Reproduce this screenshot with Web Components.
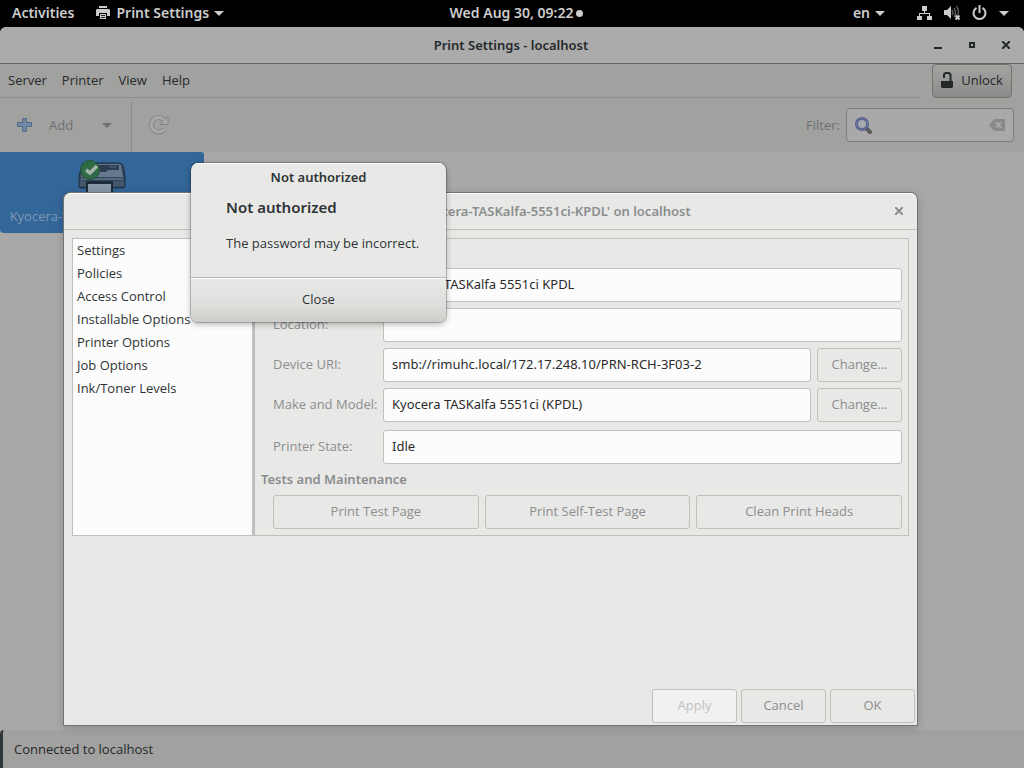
<!DOCTYPE html>
<html lang="en">
<head>
<meta charset="utf-8">
<title>Print Settings - localhost</title>
<style>
html, body { margin: 0; height: 100%; }
body { background: #000; font: 13px/20px "Open Sans", "Noto Sans", sans-serif; color: #2e3436; overflow: hidden; }
</style>
</head>
<body>
<desktop-shell>
  <top-bar slot="bar"></top-bar>
  <settings-window></settings-window>
  <properties-window slot="overlay"></properties-window>
  <message-dialog slot="overlay" heading="Not authorized" action="Close">The password may be incorrect.</message-dialog>
</desktop-shell>
<script>
const define = (name, html, setup) => customElements.define(name, class extends HTMLElement {
  constructor() {
    super();
    const t = document.createElement('template');
    t.innerHTML = html;
    this.attachShadow({ mode: 'open' }).append(t.content.cloneNode(true));
  }
  connectedCallback() { if (setup) setup(this, this.shadowRoot); }
});

define('desktop-shell', `
<style>
:host { display: flex; flex-direction: column; min-height: 100vh; position: relative; }
main { flex: 1; display: flex; }
</style>
<slot name="bar"></slot><main><slot></slot></main><slot name="overlay"></slot>`);

define('drop-arrow', `
<style>:host { display: inline-block; flex: none; line-height: 0; }</style>
<svg width="10" height="5" viewBox="0 0 10 5"><path d="M0 0h10L5 5z" fill="currentColor"/></svg>`);

define('top-bar', `
<style>
:host { display: grid; grid-template-columns: 1fr auto 1fr; align-items: center; height: 27px; padding-bottom: 1px; box-sizing: border-box; background: #000; color: #ccc; font-family: "Noto Sans", sans-serif; font-size: 14px; font-weight: 600; }
div { display: flex; align-items: center; }
button { all: unset; display: flex; align-items: center; gap: 5px; }
.left { gap: 22px; padding-left: 12px; }
.mid { padding-left: 9px; }
.mid button { gap: 3px; }
.right { justify-content: flex-end; padding-right: 15px; gap: 32px; }
.status { gap: 11px; }
i { width: 7px; height: 7px; border-radius: 50%; background: #ccc; }
svg { display: block; }
</style>
<div class="left">
  <button>Activities</button>
  <button>
    <svg width="15" height="14" viewBox="0 0 15 14" fill="#ccc"><path d="M3 0h8v2H3z"/><path d="M1 3h12l1 1v6h-3V7H3v3H0V4z"/><path d="M4 8h6v5H4z"/><path d="M5 9h4v1H5zM5 11h4v1H5z" fill="#222"/></svg>
    <span>Print Settings</span><drop-arrow></drop-arrow>
  </button>
</div>
<div class="mid"><button><span>Wed Aug 30, 09:22</span><i></i></button></div>
<div class="right">
  <button>en<drop-arrow></drop-arrow></button>
  <button class="status" aria-label="System menu">
    <svg width="16" height="16" viewBox="0 0 16 16" fill="#ccc"><path d="M5 1h5v5H5zM0 11h5v4H0zM10 11h5v4h-5z"/><path d="M7 6h1v2h5v3h-1V9H3v2H2V8h5z"/></svg>
    <svg width="17" height="16" viewBox="0 0 17 16"><path d="M0 5h3l4-4v13l-4-4H0z" fill="#ccc"/><path d="M8 5q2 2.500 0 5M10 3q3 4.500 0 9M12.500 1q4 6.500 0 10" fill="none" stroke="#555" stroke-width="1.500"/><path d="M11.500 10.500l4 4m0-4l-4 4" stroke="#ccc" stroke-width="2"/></svg>
    <svg width="16" height="16" viewBox="0 0 16 16" fill="none" stroke="#ccc" stroke-width="2"><path d="M4.500 2.800a6 6 0 1 0 6 0M7.500 0v8"/></svg>
    <drop-arrow></drop-arrow>
  </button>
</div>`);

define('menu-bar', `
<style>
:host { display: flex; align-items: flex-start; }
nav { flex: 1; display: flex; gap: 15px; height: 33px; box-sizing: content-box; align-items: center; padding-left: 8px; border-bottom: 1px solid #8e8e8c; }
button { all: unset; line-height: 18px; padding-bottom: 2px; }
.unlock { display: flex; align-items: center; justify-content: center; gap: 8px; box-sizing: border-box; width: 80px; height: 34px; margin: 0 12px; border: 1px solid #72726f; border-radius: 4px; background: linear-gradient(#a3a3a2, #959594 60%, #8a8a88); }
</style>
<nav><button>Server</button><button>Printer</button><button>View</button><button>Help</button></nav>
<button class="unlock"><svg width="12" height="16" viewBox="0 0 12 16" fill="#232829"><path d="M0 9h12v6l-1 1H1l-1-1z"/><path d="M3 6V2.500L4.500 1H8l1.500 1.500V9" fill="none" stroke="#232829" stroke-width="2"/></svg>Unlock</button>`);

define('tool-bar', `
<style>
:host { display: flex; height: 54px; align-items: center; padding: 0 10px 0 17px; color: #6e7071; }
button { all: unset; display: flex; align-items: center; }
.add { gap: 16px; }
.more { padding: 0 19px 0 29px; }
hr { align-self: stretch; margin: 4px 17px 0 0; border: 0; border-left: 1px solid #8c8c8a; }
form { margin-left: auto; display: flex; align-items: center; gap: 6px; }
.box { display: flex; align-items: center; box-sizing: border-box; width: 168px; height: 34px; padding: 0 8px; border: 1px solid #7c7c79; border-radius: 4px; background: #a9a9a9; }
input { flex: 1; min-width: 0; border: 0; background: none; font: inherit; outline: 0; }
</style>
<button class="add"><svg width="16" height="16" viewBox="0 0 16 16"><path d="M5.500 1.500h4v4h5v4h-5v5h-4v-5h-5v-4h5z" fill="#7187a6" stroke="#566a88" stroke-linejoin="round"/></svg>Add</button>
<button class="more" aria-label="More"><drop-arrow></drop-arrow></button>
<hr>
<button aria-label="Refresh"><svg width="20" height="20" viewBox="0 0 20 20" fill="none"><path d="M15 14.500A7.200 7.200 0 1 1 15 5" stroke="#858583" stroke-width="5"/><path d="M11 9.500h8V1z" fill="#aaaaa8" stroke="#858583"/><path d="M15 14.500A7.200 7.200 0 1 1 15 5" stroke="#aaaaa8" stroke-width="3"/></svg></button>
<form><label for="f">Filter:</label>
<span class="box">
<svg width="17" height="17" viewBox="0 0 17 17"><path d="M11 11l4 4" stroke="#5b5b58" stroke-width="4" stroke-linecap="round"/><circle cx="7" cy="7" r="5.500" fill="#a4a9b0" stroke="#4f5c84" stroke-width="3"/><circle cx="7" cy="7" r="5.500" fill="none" stroke="#7380a8" stroke-width="1"/></svg>
<input id="f" type="text">
<svg width="16" height="12" viewBox="0 0 16 12"><path d="M0 6l5-6h11v12H5z" fill="#8a8a89"/><path d="M7 3.500l5 5m0-5l-5 5" stroke="#a9a9a9" stroke-width="2"/></svg>
</span></form>`);

define('printer-tile', `
<style>
:host { display: flex; flex-direction: column; align-items: center; box-sizing: border-box; width: 204px; padding: 2px 8px 7px; border-radius: 0 3px 4px 4px; background: #336699; color: #7f98b5; }
svg { display: block; }
span { line-height: 19px; white-space: nowrap; }
</style>
<svg width="48" height="53" viewBox="0 0 48 53">
<path d="M4 11q0-2 3-2h34q3 0 4 2l2 11v10q0 2-2 2H3q-2 0-2-2V22z" fill="#33485d" stroke="#1d2f40"/>
<path d="M5 12q0-2 3-2h32q3 0 3 2l2 11H3z" fill="#65788d"/>
<path d="M20 11h21v5H30l-2 2h-6l-2-2z" fill="#2b3c4e"/>
<path d="M31 13h8" stroke="#53667a"/>
<path d="M3 25h42" stroke="#7688a0"/>
<path d="M2 27h44v5H2z" fill="#44586d"/>
<path d="M8 27h27v14H8z" fill="#1d2c3a"/><path d="M10 30h23v12H10z" fill="#8797a8"/>
<circle cx="12" cy="16" r="9.500" fill="#2f6b46" stroke="#25513b"/>
<path d="M8 16l4 3 7-7" fill="none" stroke="#a8b5ac" stroke-width="3.500"/>
</svg>
<span><slot></slot></span>`);

define('settings-window', `
<style>
:host { flex: 1; display: flex; flex-direction: column; overflow: hidden; border-radius: 6px 6px 0 0; background: #a1a1a0; color: #24292a; }
header { display: grid; grid-template-columns: 1fr auto 1fr; align-items: center; height: 36px; border-bottom: 1px solid #64645f; background: #ababab; padding-right: 14px; padding-left: 12px; }
h1 { grid-column: 2; margin: 0; font-family: "Noto Sans", sans-serif; font-size: 13px; font-weight: 600; }
.ctl { display: flex; justify-content: flex-end; gap: 26px; align-items: center; }
.ctl button { all: unset; line-height: 0; }
main { flex: 1; background: #a8a8a8; }
footer { display: flex; align-items: center; height: 38px; padding-left: 11px; border-left: 3px solid #303738; border-top-left-radius: 4px; }
</style>
<header><h1>Print Settings - localhost</h1>
<div class="ctl">
<button aria-label="Minimize"><svg width="8" height="8"><path d="M0 6h8v2H0z" fill="#24292a"/></svg></button>
<button aria-label="Maximize"><svg width="8" height="8"><path d="M2 2h4v4H2z" fill="none" stroke="#24292a" stroke-width="2"/></svg></button>
<button aria-label="Close"><svg width="8" height="8"><path d="M0 0l8 8M8 0L0 8" stroke="#24292a" stroke-width="2"/></svg></button>
</div></header>
<menu-bar></menu-bar>
<tool-bar></tool-bar>
<main><printer-tile>Kyocera-TASKalfa-5551ci-KPDL</printer-tile></main>
<footer>Connected to localhost</footer>`);

define('form-row', `
<style>
:host { display: flex; gap: 6px; }
label { width: 104px; line-height: 32px; color: #8b8e8f; white-space: nowrap; }
input { flex: 1; min-width: 0; box-sizing: border-box; height: 34px; padding: 0 8px 2px; border: 1px solid #bfbfbb; border-radius: 3px; background: #fcfcfc; color: #2b2b2b; font: inherit; font-family: "Noto Sans", sans-serif; outline: 0; }
</style>
<label for="i"></label><input id="i" type="text" readonly><slot></slot>`, (el, root) => {
  root.querySelector('label').textContent = el.getAttribute('label');
  root.querySelector('input').value = el.getAttribute('value') || '';
});

define('flat-button', `
<style>
:host { display: block; }
button { box-sizing: border-box; width: 100%; height: 34px; padding: 0 4px 2px; border: 1px solid #bfbfbb; border-radius: 3px; background: #e8e8e6; color: #8b8e8f; font: inherit; }
:host([off]) button { background: #f1f1f1; color: #c1c3c1; }
</style>
<button><slot></slot></button>`, (el, root) => { root.querySelector('button').disabled = el.hasAttribute('off'); });

define('properties-window', `
<style>
:host { position: absolute; left: 64px; right: 107px; top: 193px; bottom: 43px; box-sizing: border-box; display: flex; flex-direction: column; border-radius: 7px 7px 0 0; background: #e8e8e6; box-shadow: inset 0 1px #fff, 0 0 0 1px #73736f, 0 2px 8px 1px rgba(0,0,0,.18); }
header { display: grid; grid-template-columns: 1fr auto 1fr; align-items: center; height: 36px; padding: 0 14px; border-bottom: 1px solid #bfbfbb; color: #8b8e8f; }
h2 { grid-column: 2; margin: 0; font-family: "Noto Sans", sans-serif; font-size: 13px; font-weight: 600; line-height: 20px; white-space: nowrap; }
header button { all: unset; justify-self: end; line-height: 0; }
.panes { display: flex; margin: 8px 8px 0; border: 1px solid #bfbfbb; }
ul { box-sizing: border-box; width: 182px; margin: 0; padding: 0 4px; list-style: none; background: #fcfcfc; border-right: 3px solid #bfbfbb; }
li { line-height: 23px; }
.pane { flex: 1; padding: 0 6px 6px; }
h3 { margin: 0; font-family: "Noto Sans", sans-serif; font-size: 13px; font-weight: 600; color: #8b8e8f; line-height: 31px; }
h3:first-child { line-height: 29px; }
.rows { display: flex; flex-direction: column; gap: 6px; padding-left: 12px; }
form-row flat-button { width: 85px; }
.state { margin-top: 2px; }
.tests { display: grid; grid-template-columns: repeat(3, 1fr); gap: 6px; padding-left: 12px; }
footer { display: flex; justify-content: flex-end; gap: 4px; margin-top: auto; padding: 2px; }
footer flat-button { width: 85px; }
</style>
<header><h2>Printer Properties - 'Kyocera-TASKalfa-5551ci-KPDL' on localhost</h2>
<button aria-label="Close"><svg width="8" height="8"><path d="M0 0l8 8M8 0L0 8" stroke="#8b8e8f" stroke-width="2"/></svg></button></header>
<div class="panes">
<ul><li>Settings</li><li>Policies</li><li>Access Control</li><li>Installable Options</li><li>Printer Options</li><li>Job Options</li><li>Ink/Toner Levels</li></ul>
<div class="pane">
<h3>Settings</h3>
<div class="rows">
<form-row label="Description:" value="Kyocera TASKalfa 5551ci KPDL"></form-row>
<form-row label="Location:"></form-row>
<form-row label="Device URI:" value="smb://rimuhc.local/172.17.248.10/PRN-RCH-3F03-2"><flat-button>Change...</flat-button></form-row>
<form-row label="Make and Model:" value="Kyocera TASKalfa 5551ci (KPDL)"><flat-button>Change...</flat-button></form-row>
<form-row class="state" label="Printer State:" value="Idle"></form-row>
</div>
<h3>Tests and Maintenance</h3>
<div class="tests"><flat-button>Print Test Page</flat-button><flat-button>Print Self-Test Page</flat-button><flat-button>Clean Print Heads</flat-button></div>
</div></div>
<footer><flat-button off>Apply</flat-button><flat-button>Cancel</flat-button><flat-button>OK</flat-button></footer>`);

define('message-dialog', `
<style>
:host { position: absolute; left: 191px; top: 163px; width: 255px; border-radius: 7px; overflow: hidden; background: #e8e8e6; box-shadow: 0 0 0 1px rgba(0,0,0,.2), 0 2px 6px rgba(0,0,0,.3); }
h2, h3, p { margin: 0; white-space: nowrap; }
h2, h3 { font-family: "Noto Sans", sans-serif; font-weight: 600; }
h2 { font-size: 13px; line-height: 26px; text-align: center; border-top: 1px solid #fff; }
section { padding: 5px 35px 24px; }
h3 { font-size: 15px; line-height: 24px; }
p { padding-top: 14px; }
button { display: block; box-sizing: border-box; width: 100%; height: 45px; padding: 0 0 2px; border: 0; border-top: 1px solid #b4b4b0; background: linear-gradient(#fff 1px, #e8e8e6 1px, #dfdfdd 60%, #cdcdca); color: inherit; font: inherit; }
</style>
<h2></h2><section><h3></h3><p><slot></slot></p></section><button></button>`, (el, root) => {
  root.querySelector('h2').textContent = root.querySelector('h3').textContent = el.getAttribute('heading');
  root.querySelector('button').textContent = el.getAttribute('action');
});
</script>
</body>
</html>
